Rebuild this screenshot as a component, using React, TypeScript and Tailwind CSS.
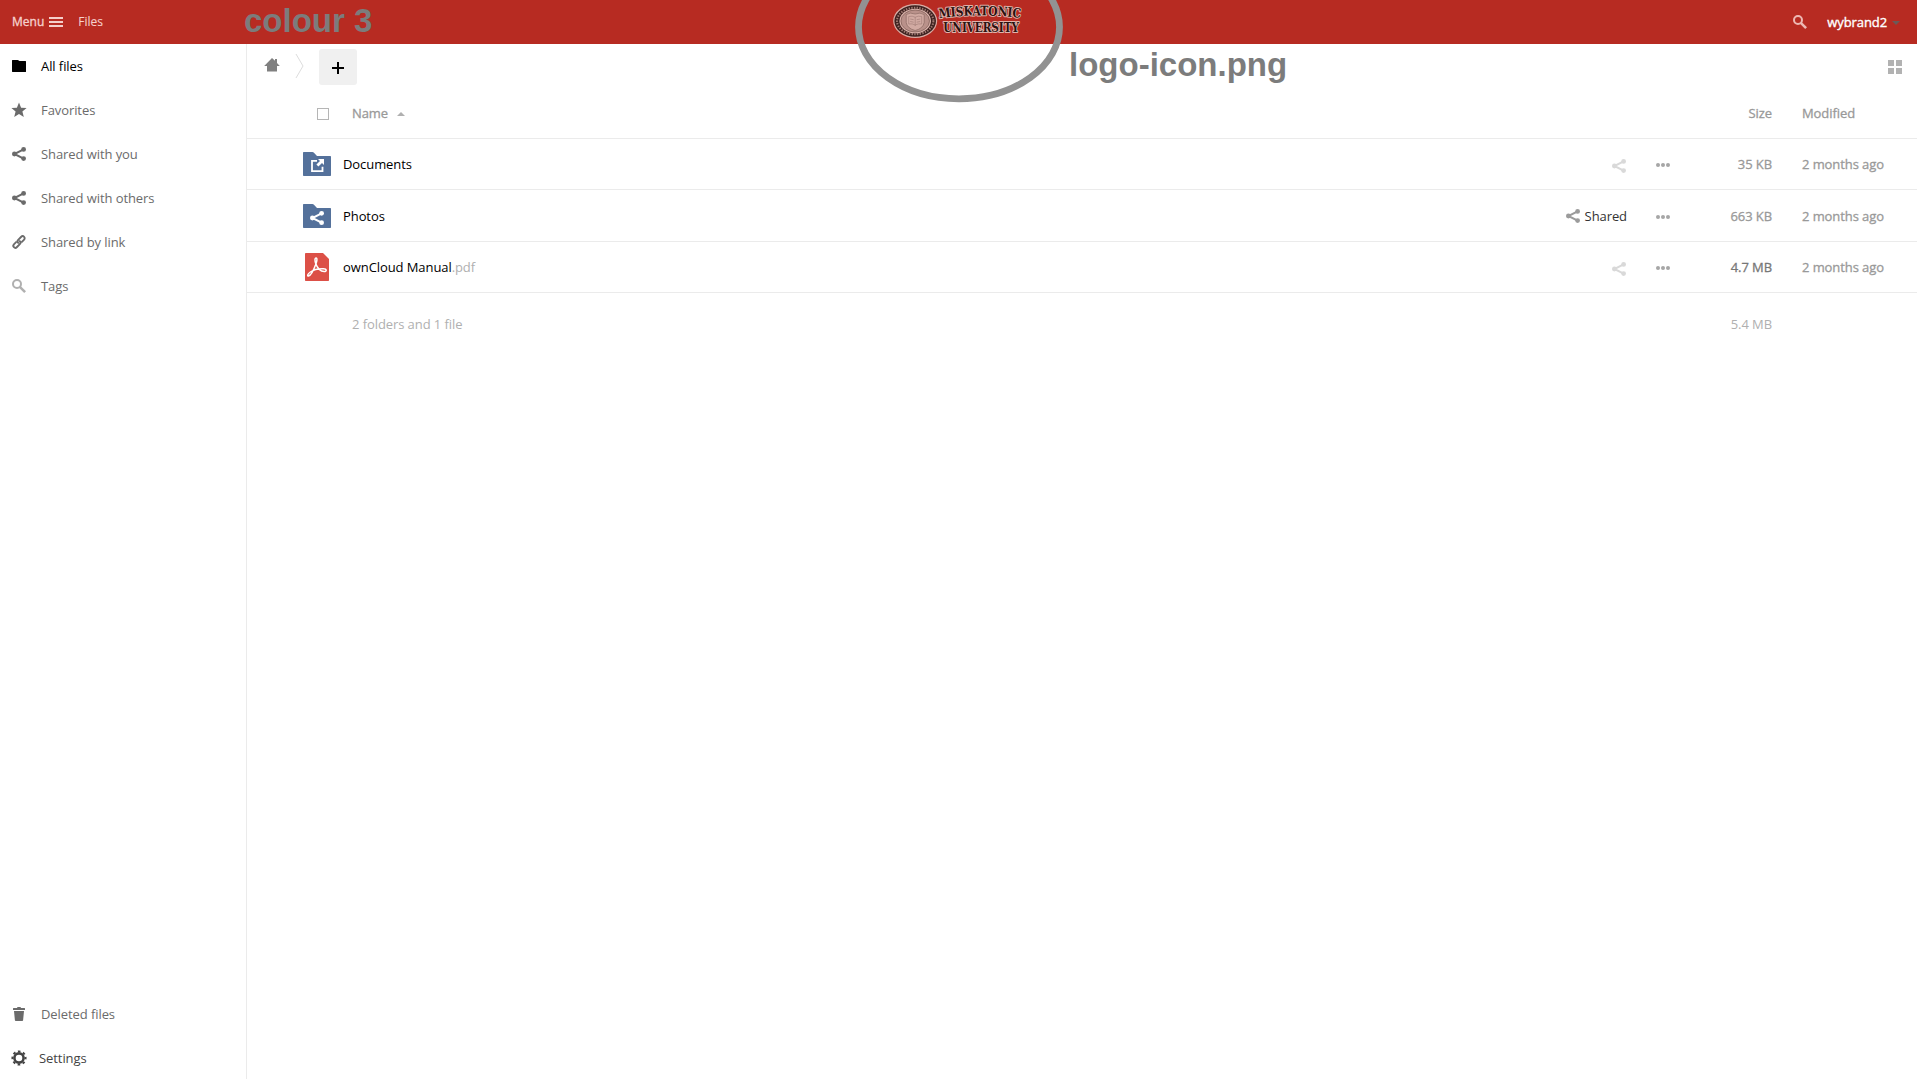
import React from "react";

type IconProps = { className?: string };

const Share = ({ className = "" }: IconProps) => (
  <svg viewBox="0 0 16 16" className={`size-4 shrink-0 ${className}`} fill="currentColor">
    <circle cx="12.6" cy="3.4" r="2.4" />
    <circle cx="3.4" cy="8" r="2.4" />
    <circle cx="12.6" cy="12.6" r="2.4" />
    <path d="M12.6 3.4 3.4 8l9.2 4.6" fill="none" stroke="currentColor" strokeWidth="2" />
  </svg>
);

const Folder = () => (
  <svg viewBox="0 0 16 16" className="size-4 shrink-0" fill="currentColor">
    <path d="M1.500 2a.5.500 0 0 0-.5.500v11c0 .3.200.5.500.5h13a.5.500 0 0 0 .5-.5v-10a.5.500 0 0 0-.5-.5H8.500L7.300 2.300A1 1 0 0 0 6.600 2z" />
  </svg>
);

const Star = () => (
  <svg viewBox="0 0 16 16" className="size-4 shrink-0" fill="currentColor">
    <path d="M8 .5l2.1 5.200 5.500.3-4.200 3.600 1.400 5.500L8 12.100l-4.800 3 1.400-5.500L.4 6l5.500-.3z" />
  </svg>
);

const Chain = () => (
  <svg viewBox="0 0 16 16" className="size-4 shrink-0" fill="none" stroke="currentColor" strokeWidth="1.9" strokeLinecap="round">
    <path d="M7.200 8.900c-1-1-.9-2.100 0-3L10 3c1-1 2.300-1 3.100-.2s.8 2.100-.2 3.100l-2 2" />
    <path d="M8.800 7.100c1 1 .9 2.100 0 3L6 13c-1 1-2.300 1-3.100.2s-.8-2.100.2-3.100l2-2" />
  </svg>
);

const Magnifier = ({ className = "" }: IconProps) => (
  <svg viewBox="0 0 16 16" className={`size-4 shrink-0 ${className}`} fill="none" stroke="currentColor">
    <circle cx="6" cy="6" r="4" strokeWidth="2" />
    <path d="M8.800 8.800l5.300 5.300" strokeWidth="2.500" />
  </svg>
);

const Trash = () => (
  <svg viewBox="0 0 16 16" className="size-4 shrink-0" fill="currentColor">
    <path d="M6.500 1 6 2H2.500a.5.5 0 0 0-.5.5V4h12V2.500a.5.500 0 0 0-.5-.5H10l-.5-1zM3 5l.9 9.200c0 .5.400.8.900.8h6.400c.5 0 .9-.3.9-.8L13 5z" />
  </svg>
);

const Gear = () => (
  <svg viewBox="0 0 16 16" className="size-4 shrink-0" fill="none" stroke="currentColor">
    <circle cx="8" cy="8" r="4.600" strokeWidth="2.600" />
    <circle cx="8" cy="8" r="6.600" strokeWidth="1.900" strokeDasharray="2.600 2.584" strokeDashoffset="1.300" />
  </svg>
);

const Home = () => (
  <svg viewBox="0 0 16 16" className="size-4" fill="currentColor">
    <path d="M8 1 .2 9H3v5.500h10V9h2.800L13 6V2h-2v1.800z" />
  </svg>
);

const FolderShape = ({ children }: { children: React.ReactNode }) => (
  <svg viewBox="0 0 32 32" className="size-8">
    <path d="M2.700 4A.7.7 0 0 0 2 4.700v22.600c0 .4.300.7.700.7h26.600c.4 0 .7-.3.700-.7V8.700c0-.4-.3-.7-.7-.7H16l-3.300-3.400c-.4-.4-.7-.6-1.200-.6z" fill="#54719b" />
    {children}
  </svg>
);

const ExternalFolder = () => (
  <FolderShape>
    <path d="M16 12.800h-5v10.400h10.500v-4.500" fill="none" stroke="#fff" strokeWidth="1.800" />
    <path d="M17 11h6v6l-2-2-3.600 3.600-2-2L19 13z" fill="#fff" />
  </FolderShape>
);

const SharedFolder = () => (
  <FolderShape>
    <g fill="#fff">
      <circle cx="20.600" cy="13.300" r="2.400" />
      <circle cx="11.400" cy="18" r="2.400" />
      <circle cx="20.600" cy="22.700" r="2.400" />
      <path d="M20.600 13.300 11.400 18l9.200 4.700" fill="none" stroke="#fff" strokeWidth="2" />
    </g>
  </FolderShape>
);

const Pdf = () => (
  <svg viewBox="0 0 32 32" className="size-8">
    <path d="M4.700 2a.7.700 0 0 0-.7.700v26.600c0 .4.300.7.700.7h22.600c.4 0 .7-.3.700-.7V8l-6-6z" fill="#dc5047" />
    <path
      d="M15.200 7c-1.500-.2-1.500 2.500-.6 5.300 1.500 4.200 4.500 8.200 8.600 8.200 2.800 0 2.800-2.500-.8-2.700-4.400-.2-9.500.8-13 3.200-3.300 2.200-3.200 4.200-1.900 4 2.400-.4 6-8.200 7.500-12.300 1-2.800 1.400-5.500.2-5.700z"
      fill="none" stroke="#fff" strokeWidth="1.500"
    />
  </svg>
);

const Grid = () => (
  <svg viewBox="0 0 16 16" className="size-4" fill="#b2b2b2">
    <path d="M1 1h6v6H1zM9 1h6v6H9zM1 9h6v6H1zM9 9h6v6H9z" />
  </svg>
);

const Logo = () => (
  <svg viewBox="0 0 132 44" className="h-11 w-[132px] overflow-visible">
    <g transform="translate(2.700 3)">
      <ellipse cx="22.500" cy="18" rx="22" ry="17" fill="#d9aca4" />
      <ellipse cx="22.500" cy="18" rx="20.800" ry="15.700" fill="#3d2220" />
      <ellipse cx="22.500" cy="18" rx="18.200" ry="13.300" fill="none" stroke="#a17a73" strokeWidth="2" strokeDasharray="1.400 1.300" />
      <ellipse cx="22.500" cy="18" rx="15.800" ry="12.300" fill="#dbb4ac" />
      <ellipse cx="22.500" cy="18" rx="14.300" ry="11" fill="#b9918a" stroke="#70504a" strokeWidth=".6" />
      <path d="M13.500 11.500q4-2.500 9-.5 5-2 9 .5v8q-1 6-9 8-8-2-9-8z" fill="#d1aaa2" stroke="#8a6862" strokeWidth=".7" />
      <path d="M16 13.500q3.500-1 6.500.7 3-1.700 6.500-.7v7.500q-3.500-.7-6.500 1-3-1.700-6.500-1zM22.500 14v9M17.500 16l3.500.7M24 16.700l3.500-.7M17.500 18.500l3.500.7M24 19.200l3.500-.7" fill="none" stroke="#a5807a" strokeWidth=".7" />
    </g>
    <path id="logo-arc" d="M49.300 18.300Q90 12.500 133 18.300" fill="none" />
    <g fontFamily="'DejaVu Serif', serif" fontWeight="700" fill="#2b1110" stroke="#e0b3ab" strokeWidth="2" strokeLinejoin="round" paintOrder="stroke">
      <text fontSize="13"><textPath href="#logo-arc" textLength="81.500" lengthAdjust="spacingAndGlyphs">MISKATONIC</textPath></text>
      <text x="53.300" y="32.300" fontSize="12" textLength="75.500" lengthAdjust="spacingAndGlyphs">UNIVERSITY</text>
    </g>
  </svg>
);

const nav = [
  { label: "All files", icon: <Folder />, tone: "text-black" },
  { label: "Favorites", icon: <Star />, tone: "text-[#6b6b6b]" },
  { label: "Shared with you", icon: <Share />, tone: "text-[#6b6b6b]" },
  { label: "Shared with others", icon: <Share />, tone: "text-[#6b6b6b]" },
  { label: "Shared by link", icon: <Chain />, tone: "text-[#6b6b6b]" },
  { label: "Tags", icon: <Magnifier className="text-[#b0b0b0]" />, tone: "text-[#6b6b6b]" },
];

const files = [
  { name: "Documents", ext: "", icon: <ExternalFolder />, shared: false, size: "35 KB", sizeTone: "text-[#999]", row: "h-[51px]" },
  { name: "Photos", ext: "", icon: <SharedFolder />, shared: true, size: "663 KB", sizeTone: "text-[#999]", row: "h-[52px]" },
  { name: "ownCloud Manual", ext: ".pdf", icon: <Pdf />, shared: false, size: "4.7 MB", sizeTone: "text-[#777]", row: "h-[51px]" },
];

const NavItem = ({ label, icon, tone }: { label: string; icon: React.ReactNode; tone: string }) => (
  <a className={`flex h-11 items-center gap-[14px] pl-[11px] ${tone}`}>
    {icon}
    <span>{label}</span>
  </a>
);

export default function App() {
  return (
    <div className="relative flex h-[1079px] w-full flex-col overflow-hidden bg-white font-['Open_Sans',sans-serif] text-[13px] leading-5 tracking-[-0.08px]">
      <header className="flex h-11 shrink-0 items-center justify-between bg-[#b72b22] pl-3 text-[#f5cfcb]">
        <div className="flex flex-1 items-center text-[12px] tracking-normal">
          <span className="-mt-px [-webkit-text-stroke:0.35px]">Menu</span>
          <div className="ml-[5px] flex flex-col gap-[2px]">
            <i className="h-[2px] w-[14px] bg-[#f5cfcb]" />
            <i className="h-[2px] w-[14px] bg-[#f5cfcb]" />
            <i className="h-[2px] w-[14px] bg-[#f5cfcb]" />
          </div>
          <span className="-mt-px ml-[15px] [-webkit-text-stroke:0.1px]">Files</span>
        </div>
        <Logo />
        <div className="flex flex-1 items-center justify-end pr-[17px]">
          <Magnifier className="text-[#edb8b3]" />
          <span className="ml-[19px] text-white [-webkit-text-stroke:0.35px]">wybrand2</span>
          <svg viewBox="0 0 8 4" className="mt-0.5 ml-[5px] h-1 w-2" fill="#6b5a58"><path d="M0 0h8L4 4z" /></svg>
        </div>
      </header>

      <div className="flex min-h-0 flex-1">
        <aside className="flex w-[247px] shrink-0 flex-col border-r border-[#ebebeb]">
          <nav>{nav.map((n) => <NavItem key={n.label} {...n} />)}</nav>
          <div className="mt-auto -mb-px">
            <NavItem label="Deleted files" icon={<Trash />} tone="text-[#6b6b6b]" />
            <a className="flex h-11 items-center gap-3 pl-[11px] text-[#444]"><Gear /><span>Settings</span></a>
          </div>
        </aside>

        <main className="flex min-w-0 flex-1 flex-col">
          <div className="flex h-11 shrink-0 items-start pt-[5px]">
            <span className="mt-[8px] ml-[17px] text-[#808080]"><Home /></span>
            <svg viewBox="0 0 9 26" className="mt-[4px] ml-[15px] h-[26px] w-[9px]" fill="none" stroke="#ddd"><path d="M1 1l7 12-7 12" /></svg>
            <button className="ml-[15px] flex h-9 w-[38px] items-center justify-center rounded-[3px] bg-[#f0f0f0]">
              <svg viewBox="0 0 12 12" className="mt-[2px] size-3"><path d="M5 0h2v5h5v2H7v5H5V7H0V5h5z" /></svg>
            </button>
            <span className="mt-[10px] mr-[14px] ml-auto"><Grid /></span>
          </div>

          <div className="flex h-[51px] shrink-0 items-center border-b border-[#ebebeb] text-[#999] [-webkit-text-stroke:0.3px]">
            <span className="mt-px ml-[70px] size-3 border border-[#b5b5b5]" />
            <span className="ml-[23px]">Name</span>
            <svg viewBox="0 0 8 4" className="mt-[2px] ml-[9px] h-1 w-2" fill="#b0b0b0"><path d="M0 4h8L4 0z" /></svg>
            <span className="ml-auto">Size</span>
            <span className="ml-[30px] w-[115px]">Modified</span>
          </div>

          {files.map((f) => (
            <div key={f.name} className={`flex shrink-0 items-center border-b border-[#ebebeb] pl-[54px] ${f.row}`}>
              {f.icon}
              <span className="ml-[10px] text-black">{f.name}<span className="text-[#b0b0b0]">{f.ext}</span></span>
              <span className={f.shared ? "ml-auto flex items-center gap-[4px] text-[#333]" : "ml-auto flex items-center"}>
                <Share className={f.shared ? "mt-px text-[#9b9b9b]" : "mt-[3px] text-[#d9d9d9]"} />
                {f.shared && <span>Shared</span>}
              </span>
              <svg viewBox="0 0 16 16" className="mt-[2px] ml-[28px] size-4" fill="#a6a6a6"><circle cx="3" cy="8" r="2" /><circle cx="8" cy="8" r="2" /><circle cx="13" cy="8" r="2" /></svg>
              <span className={`w-[101px] text-right [-webkit-text-stroke:0.3px] ${f.sizeTone}`}>{f.size}</span>
              <span className="ml-[30px] w-[115px] text-[#999] [-webkit-text-stroke:0.3px]">2 months ago</span>
            </div>
          ))}
          <div className="flex h-[62px] items-center pr-[145px] pl-[105px] text-[#b0b0b0]">
            <span>2 folders and 1 file</span>
            <span className="ml-auto">5.4 MB</span>
          </div>
        </main>
      </div>

      <svg viewBox="0 0 210 104" className="absolute top-0 left-[854px] h-[104px] w-[210px]" fill="none">
        <ellipse cx="105" cy="27" rx="100.500" ry="71.800" stroke="#929292" strokeWidth="6.800" />
      </svg>
      <span className="absolute top-px left-[244px] font-['Liberation_Sans',sans-serif] text-[33px] leading-[40px] font-bold tracking-normal text-[#7c7c7c]">colour 3</span>
      <span className="absolute top-[45px] left-[1069px] font-['Liberation_Sans',sans-serif] text-[33px] leading-[40px] font-bold tracking-normal text-[#7c7c7c]">logo-icon.png</span>
    </div>
  );
}
